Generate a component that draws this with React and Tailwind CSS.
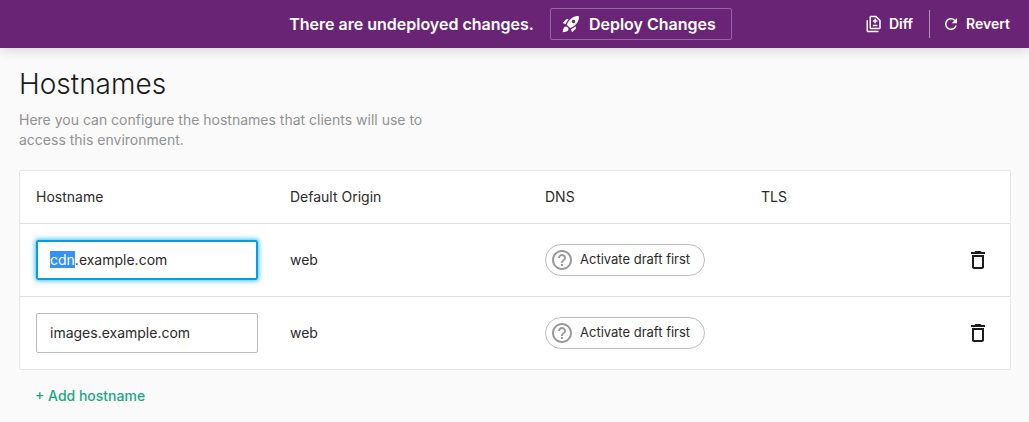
import { useEffect, useRef } from 'react';
import {
  MdDeleteOutline,
  MdHelpOutline,
  MdOutlineDifference,
  MdRefresh,
  MdRocketLaunch,
} from 'react-icons/md';

const hostnames = [
  { name: 'cdn.example.com', origin: 'web' },
  { name: 'images.example.com', origin: 'web' },
];

function DeployBar() {
  return (
    <header className="grid h-12 grid-cols-[1fr_auto_1fr] items-center bg-[#692475] text-white shadow-[0_2px_12px_rgba(0,0,0,0.16)]">
      <span />
      <div className="flex items-center gap-4 pr-2 font-semibold">
        <p>There are undeployed changes.</p>
        <button type="button" className="flex h-8 items-center gap-2 rounded-xs border border-white/30 pr-[15px] pl-[10px]">
          <MdRocketLaunch size={20} aria-hidden="true" />
          Deploy Changes
        </button>
      </div>
      <div className="flex items-center justify-end pr-[19px] text-sm font-semibold">
        <button type="button" className="flex items-center gap-1.5 pr-4">
          <MdOutlineDifference size={18} aria-hidden="true" />
          Diff
        </button>
        <span className="h-7 w-px bg-white/50" />
        <button type="button" className="flex items-center gap-1.5 pl-3">
          <MdRefresh size={18} aria-hidden="true" />
          Revert
        </button>
      </div>
    </header>
  );
}

function HostnameInput({ value, active }) {
  const ref = useRef(null);

  useEffect(() => {
    if (active) {
      ref.current.focus();
      ref.current.setSelectionRange(0, value.indexOf('.'));
    }
  }, [active, value]);

  return (
    <input
      ref={ref}
      type="text"
      aria-label="Hostname"
      defaultValue={value}
      spellCheck={false}
      className="block h-10 w-full rounded-xs border border-[#bdbdbd] bg-white px-[13px] outline-none selection:bg-[#3390ff] selection:text-white focus:border-[#039fe0] focus:shadow-[inset_0_0_0_1px_#039fe0,0_0_5px_1px_rgba(3,159,224,0.7)]"
    />
  );
}

function DnsStatus() {
  return (
    <span className="flex h-8 w-fit items-center gap-1.5 rounded-full border border-[#bdbdbd] pr-3.5 pl-1 text-[13px]">
      <MdHelpOutline size={24} className="text-[#9a9a9a]" aria-hidden="true" />
      Activate draft first
    </span>
  );
}

export default function App() {
  return (
    <div className="min-h-screen bg-[#fafafa] font-['Inter',sans-serif] text-[#1c1c1c]">
      <DeployBar />
      <main className="pt-4 pr-[18px] pl-[19px]">
        <h1 className="text-[28px] leading-10 font-light">Hostnames</h1>
        <p className="mt-1.5 max-w-[420px] text-sm leading-5 text-[#929292]">
          Here you can configure the hostnames that clients will use to access this environment.
        </p>
        <div className="mt-5 rounded-xs border border-[#e6e6e6] bg-white">
          <table className="w-full table-fixed text-left text-sm text-[#2b2b2b]">
            <colgroup>
              <col className="w-[254px]" />
              <col className="w-[255px]" />
              <col className="w-[216px]" />
              <col />
              <col className="w-16" />
            </colgroup>
            <thead>
              <tr className="h-[52px] border-b border-[#dedede]">
                <th className="pl-4 font-normal">Hostname</th>
                <th className="pl-4 font-normal">Default Origin</th>
                <th className="pl-4 font-normal">DNS</th>
                <th className="pl-4 font-normal">TLS</th>
                <td />
              </tr>
            </thead>
            <tbody>
              {hostnames.map((host, index) => (
                <tr key={host.name} className="h-[73px] border-b border-[#dedede] last:border-b-0">
                  <td className="pr-4 pl-4">
                    <HostnameInput value={host.name} active={index === 0} />
                  </td>
                  <td className="pl-4">{host.origin}</td>
                  <td className="pl-4">
                    <DnsStatus />
                  </td>
                  <td />
                  <td className="pr-5">
                    <button type="button" aria-label={`Delete ${host.name}`} className="ml-auto block text-[#1c1c1c]">
                      <MdDeleteOutline size={24} />
                    </button>
                  </td>
                </tr>
              ))}
            </tbody>
          </table>
        </div>
        <button type="button" className="mt-4 ml-4 block text-sm font-medium text-[#1ba784]">
          + Add hostname
        </button>
      </main>
    </div>
  );
}
